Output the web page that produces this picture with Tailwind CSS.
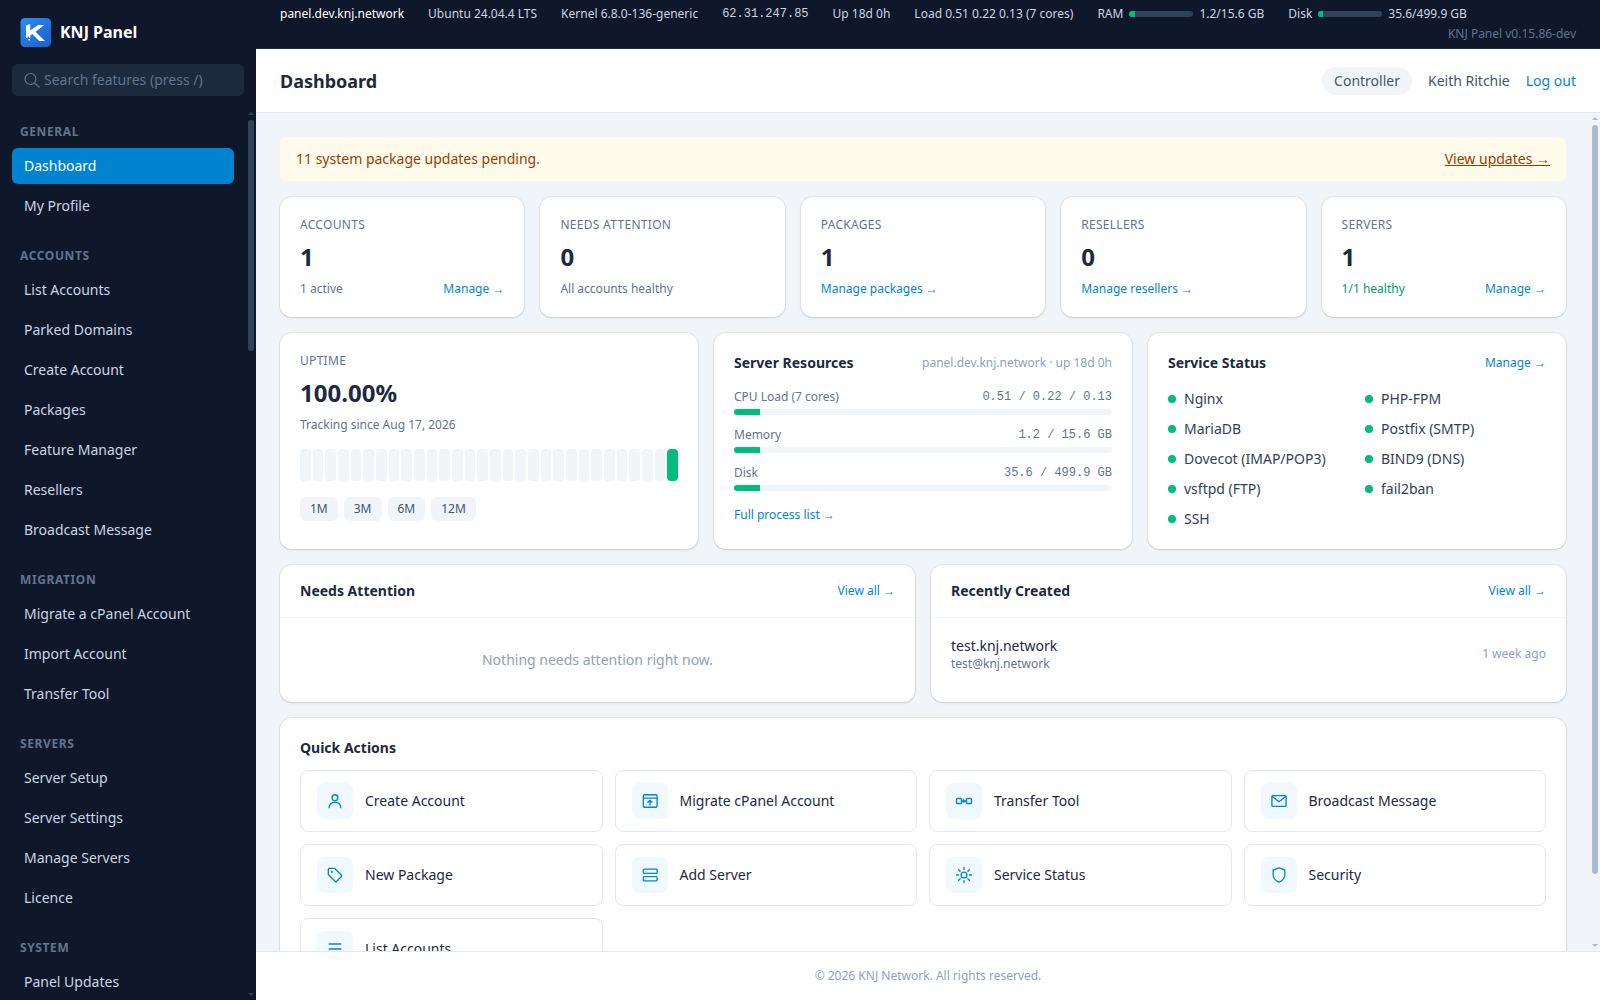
<!DOCTYPE html>
<html lang="en">
<head>
<meta charset="utf-8">
<meta name="viewport" content="width=device-width, initial-scale=1">
<title>Dashboard - KNJ Panel</title>
<script src="https://cdn.jsdelivr.net/npm/@tailwindcss/browser@4"></script>
</head>
<body class="flex h-screen overflow-hidden bg-slate-100 font-['Noto_Sans',sans-serif] text-sm text-slate-800">

<aside class="flex w-64 shrink-0 flex-col bg-slate-900">
  <div class="flex h-16 shrink-0 items-center gap-2 px-5">
    <svg class="size-8" viewBox="0 0 32 32" aria-hidden="true">
      <defs><linearGradient id="logo" x1="0" y1="0" x2="1" y2="1"><stop offset="0" stop-color="#2b8cf5"/><stop offset="1" stop-color="#1d5fc8"/></linearGradient></defs>
      <rect x=".5" y="2" width="30.5" height="29" rx="4.500" fill="url(#logo)"/>
      <path fill="#fff" d="M6 9.500 10.200 8v6.600L18.300 9h6l-8.800 6.700 9.500 9.300h-5.800l-7-6.900-2 1.700V22H9v-1.500H7.500V22H6z"/>
      <path fill="#fff" d="M8.500 23H10v1.500H8.500z"/>
    </svg>
    <span class="text-base font-bold text-white">KNJ Panel</span>
  </div>
  <div class="shrink-0 px-3">
    <label class="flex h-8 items-center gap-1 rounded-md bg-slate-800 px-3">
      <svg class="size-4 shrink-0 text-slate-500" viewBox="0 0 16 16" fill="none" stroke="currentColor" stroke-width="1.200" stroke-linecap="round" aria-hidden="true"><circle cx="6.500" cy="7" r="5.500"/><path d="m10.500 11 4.500 4"/></svg>
      <input type="search" aria-label="Search features" placeholder="Search features (press /)" class="w-full min-w-0 bg-transparent text-sm text-white outline-none placeholder:text-slate-500">
    </label>
  </div>
  <div class="mt-3 flex min-h-0 grow">
    <nav class="min-w-0 grow overflow-y-auto px-3 pt-4 [scrollbar-width:none]">
      <div class="flex flex-col gap-6">
        <section>
          <h2 class="mb-2 px-2 text-xs font-bold tracking-wider text-slate-500 uppercase">General</h2>
          <div class="flex flex-col gap-1 text-slate-300">
            <a href="#" class="rounded-md bg-sky-600 px-3 py-2 text-white">Dashboard</a>
            <a href="#" class="rounded-md px-3 py-2">My Profile</a>
          </div>
        </section>
        <section>
          <h2 class="mb-2 px-2 text-xs font-bold tracking-wider text-slate-500 uppercase">Accounts</h2>
          <div class="flex flex-col gap-1 text-slate-300">
            <a href="#" class="rounded-md px-3 py-2">List Accounts</a>
            <a href="#" class="rounded-md px-3 py-2">Parked Domains</a>
            <a href="#" class="rounded-md px-3 py-2">Create Account</a>
            <a href="#" class="rounded-md px-3 py-2">Packages</a>
            <a href="#" class="rounded-md px-3 py-2">Feature Manager</a>
            <a href="#" class="rounded-md px-3 py-2">Resellers</a>
            <a href="#" class="rounded-md px-3 py-2">Broadcast Message</a>
          </div>
        </section>
        <section>
          <h2 class="mb-2 px-2 text-xs font-bold tracking-wider text-slate-500 uppercase">Migration</h2>
          <div class="flex flex-col gap-1 text-slate-300">
            <a href="#" class="rounded-md px-3 py-2">Migrate a cPanel Account</a>
            <a href="#" class="rounded-md px-3 py-2">Import Account</a>
            <a href="#" class="rounded-md px-3 py-2">Transfer Tool</a>
          </div>
        </section>
        <section>
          <h2 class="mb-2 px-2 text-xs font-bold tracking-wider text-slate-500 uppercase">Servers</h2>
          <div class="flex flex-col gap-1 text-slate-300">
            <a href="#" class="rounded-md px-3 py-2">Server Setup</a>
            <a href="#" class="rounded-md px-3 py-2">Server Settings</a>
            <a href="#" class="rounded-md px-3 py-2">Manage Servers</a>
            <a href="#" class="rounded-md px-3 py-2">Licence</a>
          </div>
        </section>
        <section>
          <h2 class="mb-2 px-2 text-xs font-bold tracking-wider text-slate-500 uppercase">System</h2>
          <div class="flex flex-col gap-1 text-slate-300">
            <a href="#" class="rounded-md px-3 py-2">Panel Updates</a>
          </div>
        </section>
      </div>
    </nav>
    <!-- scroll track -->
    <div class="flex w-2.5 shrink-0 flex-col items-center text-slate-700" aria-hidden="true">
      <svg class="h-3 w-1.5 shrink-0" viewBox="0 0 6 12" fill="currentColor"><path d="M0 7 3 4l3 3z"/></svg>
      <div class="min-h-0 w-full grow px-0.5"><div class="rounded-full bg-slate-700" style="height:26.6%"></div></div>
      <svg class="h-3 w-1.5 shrink-0" viewBox="0 0 6 12" fill="currentColor"><path d="m0 5 3 3 3-3z"/></svg>
    </div>
  </div>
</aside>

<div class="flex min-w-0 grow flex-col">
  <div class="flex shrink-0 flex-col gap-1 border-b border-slate-800 bg-slate-900 px-6 py-1.5 text-xs text-slate-300">
    <div class="flex h-4 items-center gap-6 whitespace-nowrap">
      <span class="text-white">panel.dev.knj.network</span>
      <span>Ubuntu 24.04.4 LTS</span>
      <span>Kernel 6.8.0-136-generic</span>
      <span class="font-['Liberation_Mono',monospace]">62.31.247.85</span>
      <span>Up 18d 0h</span>
      <span>Load 0.51 0.22 0.13 (7 cores)</span>
      <span class="flex items-center gap-1.5">RAM
        <span class="h-1.5 w-16 overflow-hidden rounded-full bg-slate-700"><span class="block h-full bg-emerald-500" style="width:8%"></span></span>
        1.2/15.6 GB</span>
      <span class="flex items-center gap-1.5">Disk
        <span class="h-1.5 w-16 overflow-hidden rounded-full bg-slate-700"><span class="block h-full bg-emerald-500" style="width:8%"></span></span>
        35.6/499.9 GB</span>
    </div>
    <div class="text-right text-slate-500">KNJ Panel v0.15.86-dev</div>
  </div>

  <header class="flex h-16 shrink-0 items-center justify-between border-b border-slate-200 bg-white px-6">
    <h1 class="text-lg font-bold">Dashboard</h1>
    <div class="flex items-center gap-4 text-slate-600">
      <span class="rounded-full bg-slate-100 px-3 py-1">Controller</span>
      <span>Keith Ritchie</span>
      <a href="#" class="text-sky-600">Log out</a>
    </div>
  </header>

  <div class="flex min-h-0 grow">
    <main class="min-w-0 grow overflow-y-auto p-6 [scrollbar-width:none]">
      <div class="flex flex-col gap-4">
        <div class="flex items-center justify-between rounded-md bg-amber-50 px-4 py-3 text-amber-800">
          <span>11 system package updates pending.</span>
          <a href="#" class="underline">View updates →</a>
        </div>

        <div class="grid grid-cols-5 gap-4">
          <section class="flex flex-col gap-2 rounded-xl bg-white p-5 text-xs text-slate-500 shadow-sm ring-1 ring-slate-900/5">
            <h2 class="tracking-wide uppercase">Accounts</h2>
            <p class="text-2xl font-bold text-slate-800">1</p>
            <div class="flex justify-between"><span>1 active</span><a href="#" class="text-sky-600">Manage →</a></div>
          </section>
          <section class="flex flex-col gap-2 rounded-xl bg-white p-5 text-xs text-slate-500 shadow-sm ring-1 ring-slate-900/5">
            <h2 class="tracking-wide uppercase">Needs Attention</h2>
            <p class="text-2xl font-bold text-slate-800">0</p>
            <div>All accounts healthy</div>
          </section>
          <section class="flex flex-col gap-2 rounded-xl bg-white p-5 text-xs text-slate-500 shadow-sm ring-1 ring-slate-900/5">
            <h2 class="tracking-wide uppercase">Packages</h2>
            <p class="text-2xl font-bold text-slate-800">1</p>
            <a href="#" class="text-sky-600">Manage packages →</a>
          </section>
          <section class="flex flex-col gap-2 rounded-xl bg-white p-5 text-xs text-slate-500 shadow-sm ring-1 ring-slate-900/5">
            <h2 class="tracking-wide uppercase">Resellers</h2>
            <p class="text-2xl font-bold text-slate-800">0</p>
            <a href="#" class="text-sky-600">Manage resellers →</a>
          </section>
          <section class="flex flex-col gap-2 rounded-xl bg-white p-5 text-xs text-slate-500 shadow-sm ring-1 ring-slate-900/5">
            <h2 class="tracking-wide uppercase">Servers</h2>
            <p class="text-2xl font-bold text-slate-800">1</p>
            <div class="flex justify-between"><span class="text-emerald-600">1/1 healthy</span><a href="#" class="text-sky-600">Manage →</a></div>
          </section>
        </div>

        <div class="grid grid-cols-3 gap-4">
          <section class="rounded-xl bg-white p-5 text-xs text-slate-500 shadow-sm ring-1 ring-slate-900/5">
            <h2 class="tracking-wide uppercase">Uptime</h2>
            <p class="mt-2 text-2xl font-bold text-slate-800">100.00%</p>
            <p class="mt-2">Tracking since Aug 17, 2026</p>
            <div id="uptime-days" class="mt-4 flex h-8 gap-0.5 *:flex-1 *:rounded-sm *:bg-slate-100 *:last:bg-emerald-500"></div>
            <div class="mt-4 flex gap-1.5 text-slate-600">
              <button type="button" class="rounded-md bg-slate-100 px-2.5 py-1">1M</button>
              <button type="button" class="rounded-md bg-slate-100 px-2.5 py-1">3M</button>
              <button type="button" class="rounded-md bg-slate-100 px-2.5 py-1">6M</button>
              <button type="button" class="rounded-md bg-slate-100 px-2.5 py-1">12M</button>
            </div>
          </section>

          <section class="rounded-xl bg-white p-5 text-xs text-slate-500 shadow-sm ring-1 ring-slate-900/5">
            <div class="mb-4 flex items-center justify-between">
              <h2 class="text-sm font-bold text-slate-800">Server Resources</h2>
              <span class="text-slate-400">panel.dev.knj.network · up 18d 0h</span>
            </div>
            <div class="flex flex-col gap-3">
              <div>
                <div class="flex justify-between"><span>CPU Load (7 cores)</span><span class="font-['Liberation_Mono',monospace]">0.51 / 0.22 / 0.13</span></div>
                <div class="mt-1 h-1.5 overflow-hidden rounded-full bg-slate-100"><div class="h-full bg-emerald-500" style="width:7%"></div></div>
              </div>
              <div>
                <div class="flex justify-between"><span>Memory</span><span class="font-['Liberation_Mono',monospace]">1.2 / 15.6 GB</span></div>
                <div class="mt-1 h-1.5 overflow-hidden rounded-full bg-slate-100"><div class="h-full bg-emerald-500" style="width:7%"></div></div>
              </div>
              <div>
                <div class="flex justify-between"><span>Disk</span><span class="font-['Liberation_Mono',monospace]">35.6 / 499.9 GB</span></div>
                <div class="mt-1 h-1.5 overflow-hidden rounded-full bg-slate-100"><div class="h-full bg-emerald-500" style="width:7%"></div></div>
              </div>
            </div>
            <a href="#" class="mt-4 block text-sky-600">Full process list →</a>
          </section>

          <section class="rounded-xl bg-white p-5 shadow-sm ring-1 ring-slate-900/5">
            <div class="mb-4 flex items-center justify-between">
              <h2 class="font-bold">Service Status</h2>
              <a href="#" class="text-xs text-sky-600">Manage →</a>
            </div>
            <ul class="grid grid-cols-2 gap-x-4 gap-y-2.5 text-slate-700">
              <li class="flex items-center gap-2"><span class="size-2 rounded-full bg-emerald-500"></span>Nginx</li>
              <li class="flex items-center gap-2"><span class="size-2 rounded-full bg-emerald-500"></span>PHP-FPM</li>
              <li class="flex items-center gap-2"><span class="size-2 rounded-full bg-emerald-500"></span>MariaDB</li>
              <li class="flex items-center gap-2"><span class="size-2 rounded-full bg-emerald-500"></span>Postfix (SMTP)</li>
              <li class="flex items-center gap-2"><span class="size-2 rounded-full bg-emerald-500"></span>Dovecot (IMAP/POP3)</li>
              <li class="flex items-center gap-2"><span class="size-2 rounded-full bg-emerald-500"></span>BIND9 (DNS)</li>
              <li class="flex items-center gap-2"><span class="size-2 rounded-full bg-emerald-500"></span>vsftpd (FTP)</li>
              <li class="flex items-center gap-2"><span class="size-2 rounded-full bg-emerald-500"></span>fail2ban</li>
              <li class="flex items-center gap-2"><span class="size-2 rounded-full bg-emerald-500"></span>SSH</li>
            </ul>
          </section>
        </div>

        <div class="grid grid-cols-2 gap-4">
          <section class="rounded-xl bg-white shadow-sm ring-1 ring-slate-900/5">
            <div class="flex items-center justify-between border-b border-slate-100 px-5 py-4">
              <h2 class="font-bold">Needs Attention</h2>
              <a href="#" class="text-xs text-sky-600">View all →</a>
            </div>
            <p class="px-5 py-8 text-center text-slate-400">Nothing needs attention right now.</p>
          </section>
          <section class="rounded-xl bg-white shadow-sm ring-1 ring-slate-900/5">
            <div class="flex items-center justify-between border-b border-slate-100 px-5 py-4">
              <h2 class="font-bold">Recently Created</h2>
              <a href="#" class="text-xs text-sky-600">View all →</a>
            </div>
            <div class="flex items-center justify-between px-5 py-[18px] text-xs">
              <div>
                <p class="text-sm">test.knj.network</p>
                <p class="text-slate-500">test@knj.network</p>
              </div>
              <span class="text-slate-400">1 week ago</span>
            </div>
          </section>
        </div>

        <section class="rounded-xl bg-white p-5 shadow-sm ring-1 ring-slate-900/5">
          <h2 class="mb-3 font-bold">Quick Actions</h2>
          <div class="grid grid-cols-4 gap-3">
            <a href="#" class="flex items-center gap-3 rounded-lg border border-slate-200 px-4 py-3">
              <span class="rounded-lg bg-sky-50 p-2 text-sky-600"><svg class="size-5" viewBox="0 0 24 24" fill="none" stroke="currentColor" stroke-width="1.600" stroke-linecap="round" stroke-linejoin="round"><circle cx="12" cy="8" r="3.500"/><path d="M5 20c0-3.600 3-6.500 7-6.500s7 2.900 7 6.500"/></svg></span>
              Create Account</a>
            <a href="#" class="flex items-center gap-3 rounded-lg border border-slate-200 px-4 py-3">
              <span class="rounded-lg bg-sky-50 p-2 text-sky-600"><svg class="size-5" viewBox="0 0 24 24" fill="none" stroke="currentColor" stroke-width="1.600" stroke-linecap="round" stroke-linejoin="round"><rect x="4" y="4.500" width="16.500" height="15" rx="1.500"/><path d="M4 8.500h16.500M12 17v-5.500M9.500 13.500 12 11.200l2.500 2.300"/></svg></span>
              Migrate cPanel Account</a>
            <a href="#" class="flex items-center gap-3 rounded-lg border border-slate-200 px-4 py-3">
              <span class="rounded-lg bg-sky-50 p-2 text-sky-600"><svg class="size-5" viewBox="0 0 24 24" fill="none" stroke="currentColor" stroke-width="1.600" stroke-linecap="round" stroke-linejoin="round"><rect x="3" y="9" width="6" height="6" rx="1"/><rect x="15" y="9" width="6" height="6" rx="1"/><path d="M9 12h6M11.500 10.500 13 12l-1.500 1.500"/></svg></span>
              Transfer Tool</a>
            <a href="#" class="flex items-center gap-3 rounded-lg border border-slate-200 px-4 py-3">
              <span class="rounded-lg bg-sky-50 p-2 text-sky-600"><svg class="size-5" viewBox="0 0 24 24" fill="none" stroke="currentColor" stroke-width="1.600" stroke-linecap="round" stroke-linejoin="round"><rect x="3.500" y="5.500" width="17" height="13" rx="1"/><path d="m4 6.500 8 6.500 8-6.500"/></svg></span>
              Broadcast Message</a>
            <a href="#" class="flex items-center gap-3 rounded-lg border border-slate-200 px-4 py-3">
              <span class="rounded-lg bg-sky-50 p-2 text-sky-600"><svg class="size-5" viewBox="0 0 24 24" fill="none" stroke="currentColor" stroke-width="1.600" stroke-linecap="round" stroke-linejoin="round"><path d="M4 5a1 1 0 0 1 1-1h6.500l8.200 8.300a1 1 0 0 1 0 1.400l-6 6a1 1 0 0 1-1.400 0L4 11.500z"/><circle cx="8.300" cy="8.300" r=".5" fill="currentColor"/></svg></span>
              New Package</a>
            <a href="#" class="flex items-center gap-3 rounded-lg border border-slate-200 px-4 py-3">
              <span class="rounded-lg bg-sky-50 p-2 text-sky-600"><svg class="size-5" viewBox="0 0 24 24" fill="none" stroke="currentColor" stroke-width="1.600" stroke-linecap="round" stroke-linejoin="round"><rect x="4" y="5" width="16.500" height="5" rx="1"/><rect x="4" y="14" width="16.500" height="5" rx="1"/><path d="M7 7.500h.01M7 16.500h.01" stroke-width="1"/></svg></span>
              Add Server</a>
            <a href="#" class="flex items-center gap-3 rounded-lg border border-slate-200 px-4 py-3">
              <span class="rounded-lg bg-sky-50 p-2 text-sky-600"><svg class="size-5" viewBox="0 0 24 24" fill="none" stroke="currentColor" stroke-width="1.600" stroke-linecap="round" stroke-linejoin="round"><circle cx="12" cy="12" r="3.500"/><path d="M12 3v2.500M12 18.500V21M3 12h2.500M18.500 12H21M5.600 5.600l1.800 1.800M16.600 16.600l1.800 1.800M5.600 18.400l1.800-1.800M16.600 7.400l1.800-1.800"/></svg></span>
              Service Status</a>
            <a href="#" class="flex items-center gap-3 rounded-lg border border-slate-200 px-4 py-3">
              <span class="rounded-lg bg-sky-50 p-2 text-sky-600"><svg class="size-5" viewBox="0 0 24 24" fill="none" stroke="currentColor" stroke-width="1.600" stroke-linecap="round" stroke-linejoin="round"><path d="m12 3.500 7 2.500v5.500c0 4.300-2.800 7.400-7 9-4.200-1.600-7-4.700-7-9V6z"/></svg></span>
              Security</a>
            <a href="#" class="flex items-center gap-3 rounded-lg border border-slate-200 px-4 py-3">
              <span class="rounded-lg bg-sky-50 p-2 text-sky-600"><svg class="size-5" viewBox="0 0 24 24" fill="none" stroke="currentColor" stroke-width="1.600" stroke-linecap="round" stroke-linejoin="round"><path d="M5 6h14M5 12h14M5 18h14"/></svg></span>
              List Accounts</a>
          </div>
        </section>
      </div>
    </main>
    <!-- scroll track -->
    <div class="flex w-2.5 shrink-0 flex-col items-center text-slate-400/70" aria-hidden="true">
      <svg class="h-3 w-1.5 shrink-0" viewBox="0 0 6 12" fill="currentColor"><path d="M0 7 3 4l3 3z"/></svg>
      <div class="min-h-0 w-full grow px-0.5"><div class="rounded-full bg-slate-400/70" style="height:92%"></div></div>
      <svg class="h-3 w-1.5 shrink-0" viewBox="0 0 6 12" fill="currentColor"><path d="m0 5 3 3 3-3z"/></svg>
    </div>
  </div>

  <footer class="shrink-0 border-t border-slate-200 bg-white py-4 text-center text-xs text-slate-400">© 2026 KNJ Network. All rights reserved.</footer>
</div>

<script>
  const days = document.getElementById('uptime-days');
  for (let i = 0; i < 30; i++) days.appendChild(document.createElement('span'));
</script>
</body>
</html>
